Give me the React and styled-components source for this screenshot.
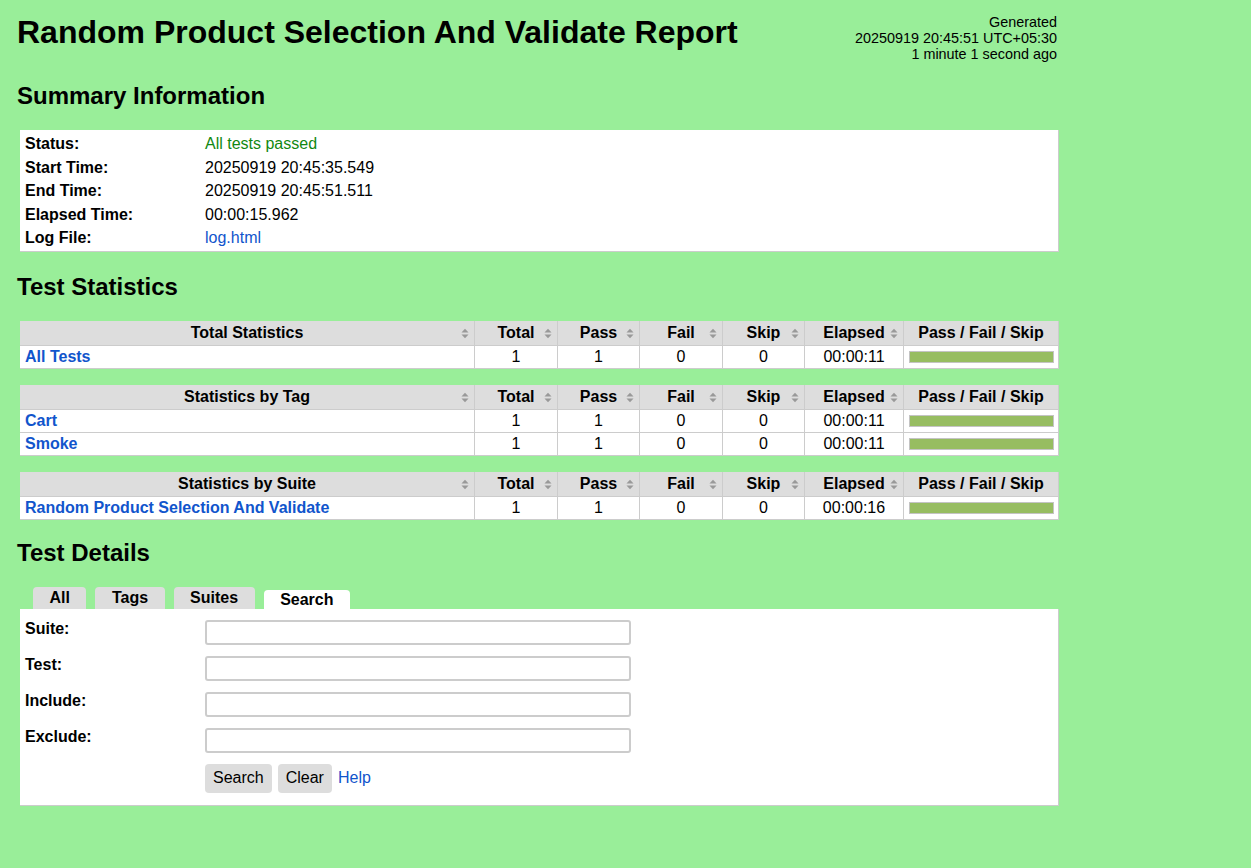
import styled, { createGlobalStyle } from "styled-components";

const GlobalStyle = createGlobalStyle`
  html, body {
    margin: 0;
    padding: 0;
    background: #99ee99;
  }
  body {
    font-family: "Liberation Sans", Arial, sans-serif;
    font-size: 16px;
    color: #000;
  }
`;

const Page = styled.div`
  padding: 14px 0 40px 17px;
  min-height: 814px;
`;

const Header = styled.div`
  display: flex;
  justify-content: space-between;
  align-items: flex-start;
  width: 1040px;
  height: 48px;
`;

const Title = styled.h1`
  margin: 0;
  font-size: 32px;
  line-height: 36px;
  font-weight: 700;
`;

const Generated = styled.div`
  text-align: right;
  font-size: 14.4px;
  line-height: 16px;
  white-space: nowrap;
`;

const Heading = styled.h2`
  margin: ${(p) => p.$top ?? 20}px 0 ${(p) => p.$bottom ?? 21}px;
  font-size: 24px;
  line-height: 28px;
  font-weight: 700;
`;

const Link = styled.a`
  color: #1155cc;
  text-decoration: none;
  font-weight: ${(p) => (p.$bold ? 700 : 400)};
  cursor: pointer;
`;

const Summary = styled.div`
  display: grid;
  grid-template-columns: 185px 1fr;
  width: 1039px;
  margin-left: 3px;
  box-sizing: border-box;
  padding: 2px 0 1px;
  background: #fff;
  border-right: 1px solid #ccc;
  border-bottom: 1px solid #ccc;
`;

const SummaryLabel = styled.div`
  font-weight: 700;
  padding: 2px 5px;
  line-height: 19.5px;
`;

const SummaryValue = styled.div`
  padding: 2px 0;
  line-height: 19.5px;
  color: ${(p) => p.$color || "#000"};
`;

const StatGrid = styled.div`
  display: grid;
  grid-template-columns: 455px 83px 82px 83px 82px 99px 155px;
  width: 1039px;
  margin: 0 0 16px 3px;
  background: #fff;
`;

const HeadCell = styled.div`
  position: relative;
  box-sizing: border-box;
  height: 25px;
  line-height: 24px;
  background: #dddddd;
  font-weight: 700;
  text-align: center;
  border-right: 1px solid #ccc;
  border-bottom: 1px solid #ccc;
  white-space: nowrap;
`;

const SortIcon = styled.svg`
  position: absolute;
  right: 5px;
  top: 7px;
`;

const Cell = styled.div`
  box-sizing: border-box;
  height: 23px;
  line-height: 22px;
  padding: 0 ${(p) => (p.$left ? "5px" : "0")};
  text-align: ${(p) => (p.$left ? "left" : "center")};
  border-right: 1px solid #ccc;
  border-bottom: 1px solid #ccc;
  white-space: nowrap;
  overflow: hidden;
`;

const GraphCell = styled(Cell)`
  padding: 5px 4px 0 5px;
`;

const Bar = styled.div`
  box-sizing: border-box;
  height: 12px;
  border: 1px solid #c4c4c4;
  background: #97bd61;
`;

const Tabs = styled.div`
  display: flex;
  align-items: flex-end;
  gap: 9px;
  height: 22px;
  padding-left: 16px;
`;

const Tab = styled.div`
  box-sizing: border-box;
  height: ${(p) => (p.$active ? "19px" : "22px")};
  line-height: ${(p) => (p.$active ? "20px" : "21px")};
  padding: 0 16.5px;
  font-weight: 700;
  background: ${(p) => (p.$active ? "#fff" : "#dddddd")};
  border-radius: 4px 4px 0 0;
  cursor: pointer;
`;

const Panel = styled.div`
  width: 1039px;
  margin-left: 3px;
  box-sizing: border-box;
  background: #fff;
  padding: 11px 0 12px 5px;
  border-right: 1px solid #ccc;
  border-bottom: 1px solid #ccc;
`;

const FormRow = styled.div`
  display: grid;
  grid-template-columns: 180px 426px;
  align-items: start;
  margin-bottom: 11px;
`;

const FormLabel = styled.label`
  font-weight: 700;
  line-height: 18px;
`;

const Input = styled.input`
  box-sizing: border-box;
  width: 426px;
  height: 25px;
  margin: 0;
  border: 2px solid #cccccc;
  border-radius: 3px;
  font: inherit;
  padding: 0 4px;
  outline: none;
`;

const Actions = styled.div`
  display: flex;
  align-items: center;
  gap: 6px;
  margin: 0 0 0 180px;
`;

const Button = styled.button`
  height: 29px;
  padding: 0 8px;
  border: none;
  border-radius: 4px;
  background: #dddddd;
  font-family: "Liberation Sans", Arial, sans-serif;
  font-size: 16px;
  color: #000;
  cursor: pointer;
`;

const Sort = () => (
  <SortIcon width="8" height="11" viewBox="0 0 8 11">
    <polygon points="0.5,4.5 4,0.8 7.5,4.5" fill="#999999" />
    <polygon points="0.5,6.5 4,10.2 7.5,6.5" fill="#999999" />
  </SortIcon>
);

const columns = ["Total", "Pass", "Fail", "Skip", "Elapsed"];

const StatTable = ({ title, rows }) => (
  <StatGrid>
    <HeadCell>
      {title}
      <Sort />
    </HeadCell>
    {columns.map((c) => (
      <HeadCell key={c}>
        {c}
        <Sort />
      </HeadCell>
    ))}
    <HeadCell>Pass / Fail / Skip</HeadCell>
    {rows.map((r) => [
      <Cell key={r.name + "n"} $left>
        <Link $bold>{r.name}</Link>
      </Cell>,
      <Cell key={r.name + "t"}>{r.total}</Cell>,
      <Cell key={r.name + "p"}>{r.pass}</Cell>,
      <Cell key={r.name + "f"}>{r.fail}</Cell>,
      <Cell key={r.name + "s"}>{r.skip}</Cell>,
      <Cell key={r.name + "e"}>{r.elapsed}</Cell>,
      <GraphCell key={r.name + "g"}>
        <Bar style={{ width: `${(r.pass / r.total) * 100}%` }} />
      </GraphCell>,
    ])}
  </StatGrid>
);

const summary = [
  ["Status:", "All tests passed", "#118811"],
  ["Start Time:", "20250919 20:45:35.549"],
  ["End Time:", "20250919 20:45:51.511"],
  ["Elapsed Time:", "00:00:15.962"],
  ["Log File:", "log.html", null, true],
];

const row = (name, elapsed) => ({ name, total: 1, pass: 1, fail: 0, skip: 0, elapsed });

export default function App() {
  return (
    <>
      <GlobalStyle />
      <Page>
        <Header>
          <Title>Random Product Selection And Validate Report</Title>
          <Generated>
            Generated
            <br />
            20250919 20:45:51 UTC+05:30
            <br />
            1 minute 1 second ago
          </Generated>
        </Header>

        <Heading $bottom={20}>Summary Information</Heading>
        <Summary>
          {summary.map(([label, value, color, link]) => [
            <SummaryLabel key={label + "l"}>{label}</SummaryLabel>,
            <SummaryValue key={label + "v"} $color={color}>
              {link ? <Link>{value}</Link> : value}
            </SummaryValue>,
          ])}
        </Summary>

        <Heading $top={21} $bottom={20}>Test Statistics</Heading>
        <StatTable title="Total Statistics" rows={[row("All Tests", "00:00:11")]} />
        <StatTable
          title="Statistics by Tag"
          rows={[row("Cart", "00:00:11"), row("Smoke", "00:00:11")]}
        />
        <StatTable
          title="Statistics by Suite"
          rows={[row("Random Product Selection And Validate", "00:00:16")]}
        />

        <Heading $top={19} $bottom={20}>Test Details</Heading>
        <Tabs>
          <Tab>All</Tab>
          <Tab>Tags</Tab>
          <Tab>Suites</Tab>
          <Tab $active>Search</Tab>
        </Tabs>
        <Panel>
          {["Suite:", "Test:", "Include:", "Exclude:"].map((l) => (
            <FormRow key={l}>
              <FormLabel>{l}</FormLabel>
              <Input type="text" />
            </FormRow>
          ))}
          <Actions>
            <Button>Search</Button>
            <Button>Clear</Button>
            <Link>Help</Link>
          </Actions>
        </Panel>
      </Page>
    </>
  );
}
